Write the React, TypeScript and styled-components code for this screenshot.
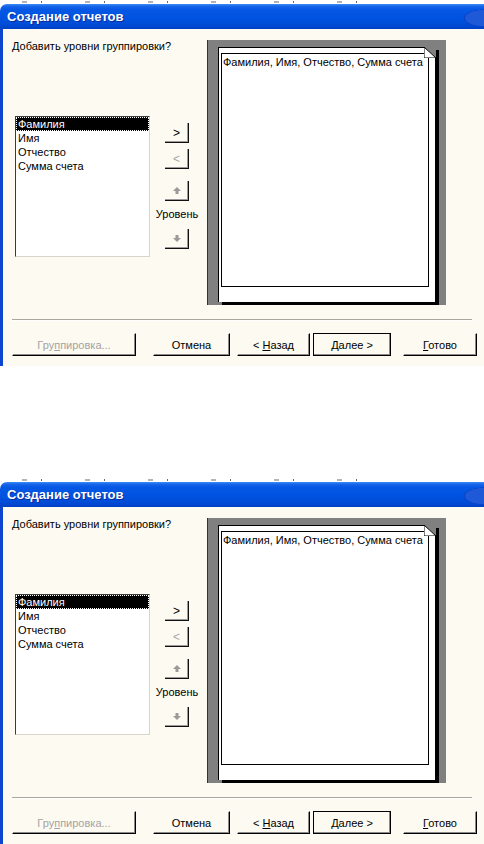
import React from "react";
import styled, { createGlobalStyle } from "styled-components";

const GlobalStyle = createGlobalStyle`
  html, body {
    margin: 0;
    padding: 0;
    background: #fff;
  }
  body {
    width: 484px;
    height: 844px;
    overflow: hidden;
    font-family: "Liberation Sans", Arial, sans-serif;
    font-size: 11px;
    color: #000;
  }
`;

const Page = styled.div`
  display: flex;
  flex-direction: column;
  gap: 112px;
  width: 484px;
`;

const Window = styled.section`
  display: flex;
  flex-direction: column;
  height: 366px;
`;

// leftover bits of the toolbar above the dialog
const ToolbarScrap = styled.div`
  height: 4px;
  background:
    repeating-linear-gradient(90deg, transparent 0 22px, #b4b4b4 22px 27px, transparent 27px 41px, #6a6a6a 41px 42px, transparent 42px 63px),
    #fff;
  background-size: 400px 2px;
  background-repeat: no-repeat;
  background-position: 0 1px;
`;

const TitleBar = styled.header`
  height: 25px;
  display: flex;
  align-items: center;
  padding-left: 7px;
  border-radius: 7px 0 0 0;
  color: #fff;
  font-family: "Liberation Sans", Arial, sans-serif;
  font-weight: bold;
  font-size: 13px;
  text-shadow: 1px 1px 0 #0a2a9a;
  background:
    radial-gradient(ellipse 26px 11px at 484px 14px, #1e5ad8 0 70%, #0a42c8 76%, transparent 80%),
    linear-gradient(180deg, #3d8ef6 0, #1a68ea 2px, #0658e4 5px, #0054e1 50%, #004cd8 80%, #0040c4 100%);
`;

const Frame = styled.div`
  flex: 1;
  display: flex;
  border-left: 3px solid #0d45cf;
  background: #fdfaf1;
`;

const Body = styled.div`
  flex: 1;
  display: flex;
  flex-direction: column;
  padding: 11px 12px 0 9px;
`;

const TopRow = styled.div`
  display: flex;
`;

const LeftCol = styled.div`
  width: 195px;
  display: flex;
  flex-direction: column;
`;

const Prompt = styled.div`
  line-height: 13px;
  height: 13px;
  white-space: nowrap;
`;

const ListRow = styled.div`
  display: flex;
  margin-top: 63px;
  padding-left: 3px;
`;

const FieldList = styled.ul`
  list-style: none;
  margin: 0;
  padding: 0;
  width: 135px;
  height: 141px;
  box-sizing: border-box;
  background: #fff;
  border: 1px solid;
  border-color: #3c3c3c #d8d5cc #d8d5cc #3c3c3c;
`;

const FieldItem = styled.li<{ $selected?: boolean }>`
  height: 14px;
  line-height: 14px;
  padding-left: 2px;
  white-space: nowrap;
  background: ${(p) => (p.$selected ? "#000" : "transparent")};
  color: ${(p) => (p.$selected ? "#fff" : "#000")};
  outline: ${(p) => (p.$selected ? "1px dotted #fff" : "none")};
  outline-offset: -1px;
`;

const ArrowCol = styled.div`
  width: 44px;
  margin-left: 5px;
  padding-top: 7px;
  display: flex;
  flex-direction: column;
  align-items: center;
`;

const SmallButton = styled.div<{ $mt?: number; $disabled?: boolean }>`
  width: 24px;
  height: 20px;
  box-sizing: border-box;
  margin-top: ${(p) => p.$mt ?? 0}px;
  display: flex;
  align-items: center;
  justify-content: center;
  font-size: 12px;
  color: ${(p) => (p.$disabled ? "#a8a8a8" : "#000")};
  border-right: 1px solid #111;
  border-bottom: 1px solid #111;
  box-shadow: inset -1px -1px 0 #9a9a9a;
`;

const LevelLabel = styled.div`
  margin-top: 7px;
  line-height: 13px;
  white-space: nowrap;
`;

const Preview = styled.div`
  width: 239px;
  height: 265px;
  box-sizing: border-box;
  background: #808080;
  border-left: 1px solid #333;
  padding: 7px 0 0 10px;
`;

const Paper = styled.div`
  position: relative;
  width: 217px;
  height: 255px;
  box-sizing: border-box;
  background: #fff;
  border-top: 1px solid #000;
  border-left: 1px solid #000;
  box-shadow: 4px 3px 0 #000;
  padding: 5px 6px 15px 2px;
`;

const Corner = styled.svg`
  position: absolute;
  top: -1px;
  right: -1px;
`;

const PaperBox = styled.div`
  height: 100%;
  box-sizing: border-box;
  border: 1px solid #000;
  padding: 2px 0 0 1px;
  line-height: 13px;
  white-space: nowrap;
`;

const Separator = styled.hr`
  width: 460px;
  margin: 14px 0 0 0;
  height: 0;
  border: none;
  border-top: 1px solid #a9a79e;
  border-bottom: 1px solid #fff;
`;

const ButtonRow = styled.div`
  display: flex;
  margin-top: 12px;
`;

const DialogButton = styled.div<{ $w: number; $ml?: number; $disabled?: boolean; $default?: boolean }>`
  width: ${(p) => p.$w}px;
  height: 23px;
  margin-left: ${(p) => p.$ml ?? 0}px;
  box-sizing: border-box;
  display: flex;
  align-items: center;
  justify-content: center;
  white-space: pre;
  color: ${(p) => (p.$disabled ? "#a3a3a3" : "#000")};
  border: 1px solid ${(p) => (p.$default ? "#000" : "transparent")};
  border-right-color: #000;
  border-bottom-color: #000;
  box-shadow: inset -1px -1px 0 #8a8a8a;
`;

const Caption = styled.span`
  white-space: pre;
`;

const Mnemonic = styled.span`
  text-decoration: underline;
  text-underline-offset: 1px;
`;

const ArrowIcon = ({ down }: { down?: boolean }) => (
  <svg width="8" height="7" viewBox="0 0 8 7">
    <g fill="#9a9a9a" transform={down ? "rotate(180 4 3.5)" : undefined}>
      <polygon points="4,0 8,4 0,4" />
      <rect x="2.5" y="4" width="3" height="3" />
    </g>
  </svg>
);

const fields = ["Фамилия", "Имя", "Отчество", "Сумма счета"];

const ReportDialog = () => (
  <Window>
    <ToolbarScrap />
    <TitleBar>Создание отчетов</TitleBar>
    <Frame>
      <Body>
        <TopRow>
          <LeftCol>
            <Prompt>Добавить уровни группировки?</Prompt>
            <ListRow>
              <FieldList>
                {fields.map((f, i) => (
                  <FieldItem key={f} $selected={i === 0}>
                    {f}
                  </FieldItem>
                ))}
              </FieldList>
              <ArrowCol>
                <SmallButton>&gt;</SmallButton>
                <SmallButton $mt={6} $disabled>
                  &lt;
                </SmallButton>
                <SmallButton $mt={12}>
                  <ArrowIcon />
                </SmallButton>
                <LevelLabel>Уровень</LevelLabel>
                <SmallButton $mt={8}>
                  <ArrowIcon down />
                </SmallButton>
              </ArrowCol>
            </ListRow>
          </LeftCol>
          <Preview>
            <Paper>
              <Corner width="12" height="11" viewBox="0 0 12 11">
                <polygon points="0,0 12,0 12,11" fill="#808080" />
                <polygon points="0,0 12,11 0,11" fill="#fff" stroke="#000" strokeWidth="1" />
              </Corner>
              <PaperBox>Фамилия, Имя, Отчество, Сумма счета</PaperBox>
            </Paper>
          </Preview>
        </TopRow>
        <Separator />
        <ButtonRow>
          <DialogButton $w={124} $disabled>
            <Caption>
              Гру<Mnemonic>п</Mnemonic>пировка...
            </Caption>
          </DialogButton>
          <DialogButton $w={77} $ml={17}>
            <Caption>Отмена</Caption>
          </DialogButton>
          <DialogButton $w={73} $ml={7}>
            <Caption>
              {"< "}
              <Mnemonic>Н</Mnemonic>азад
            </Caption>
          </DialogButton>
          <DialogButton $w={78} $ml={3} $default>
            <Caption>
              <Mnemonic>Д</Mnemonic>
              {"алее >"}
            </Caption>
          </DialogButton>
          <DialogButton $w={74} $ml={12}>
            <Caption>
              <Mnemonic>Г</Mnemonic>отово
            </Caption>
          </DialogButton>
        </ButtonRow>
      </Body>
    </Frame>
  </Window>
);

const App = () => (
  <>
    <GlobalStyle />
    <Page>
      <ReportDialog />
      <ReportDialog />
    </Page>
  </>
);

export default App;
